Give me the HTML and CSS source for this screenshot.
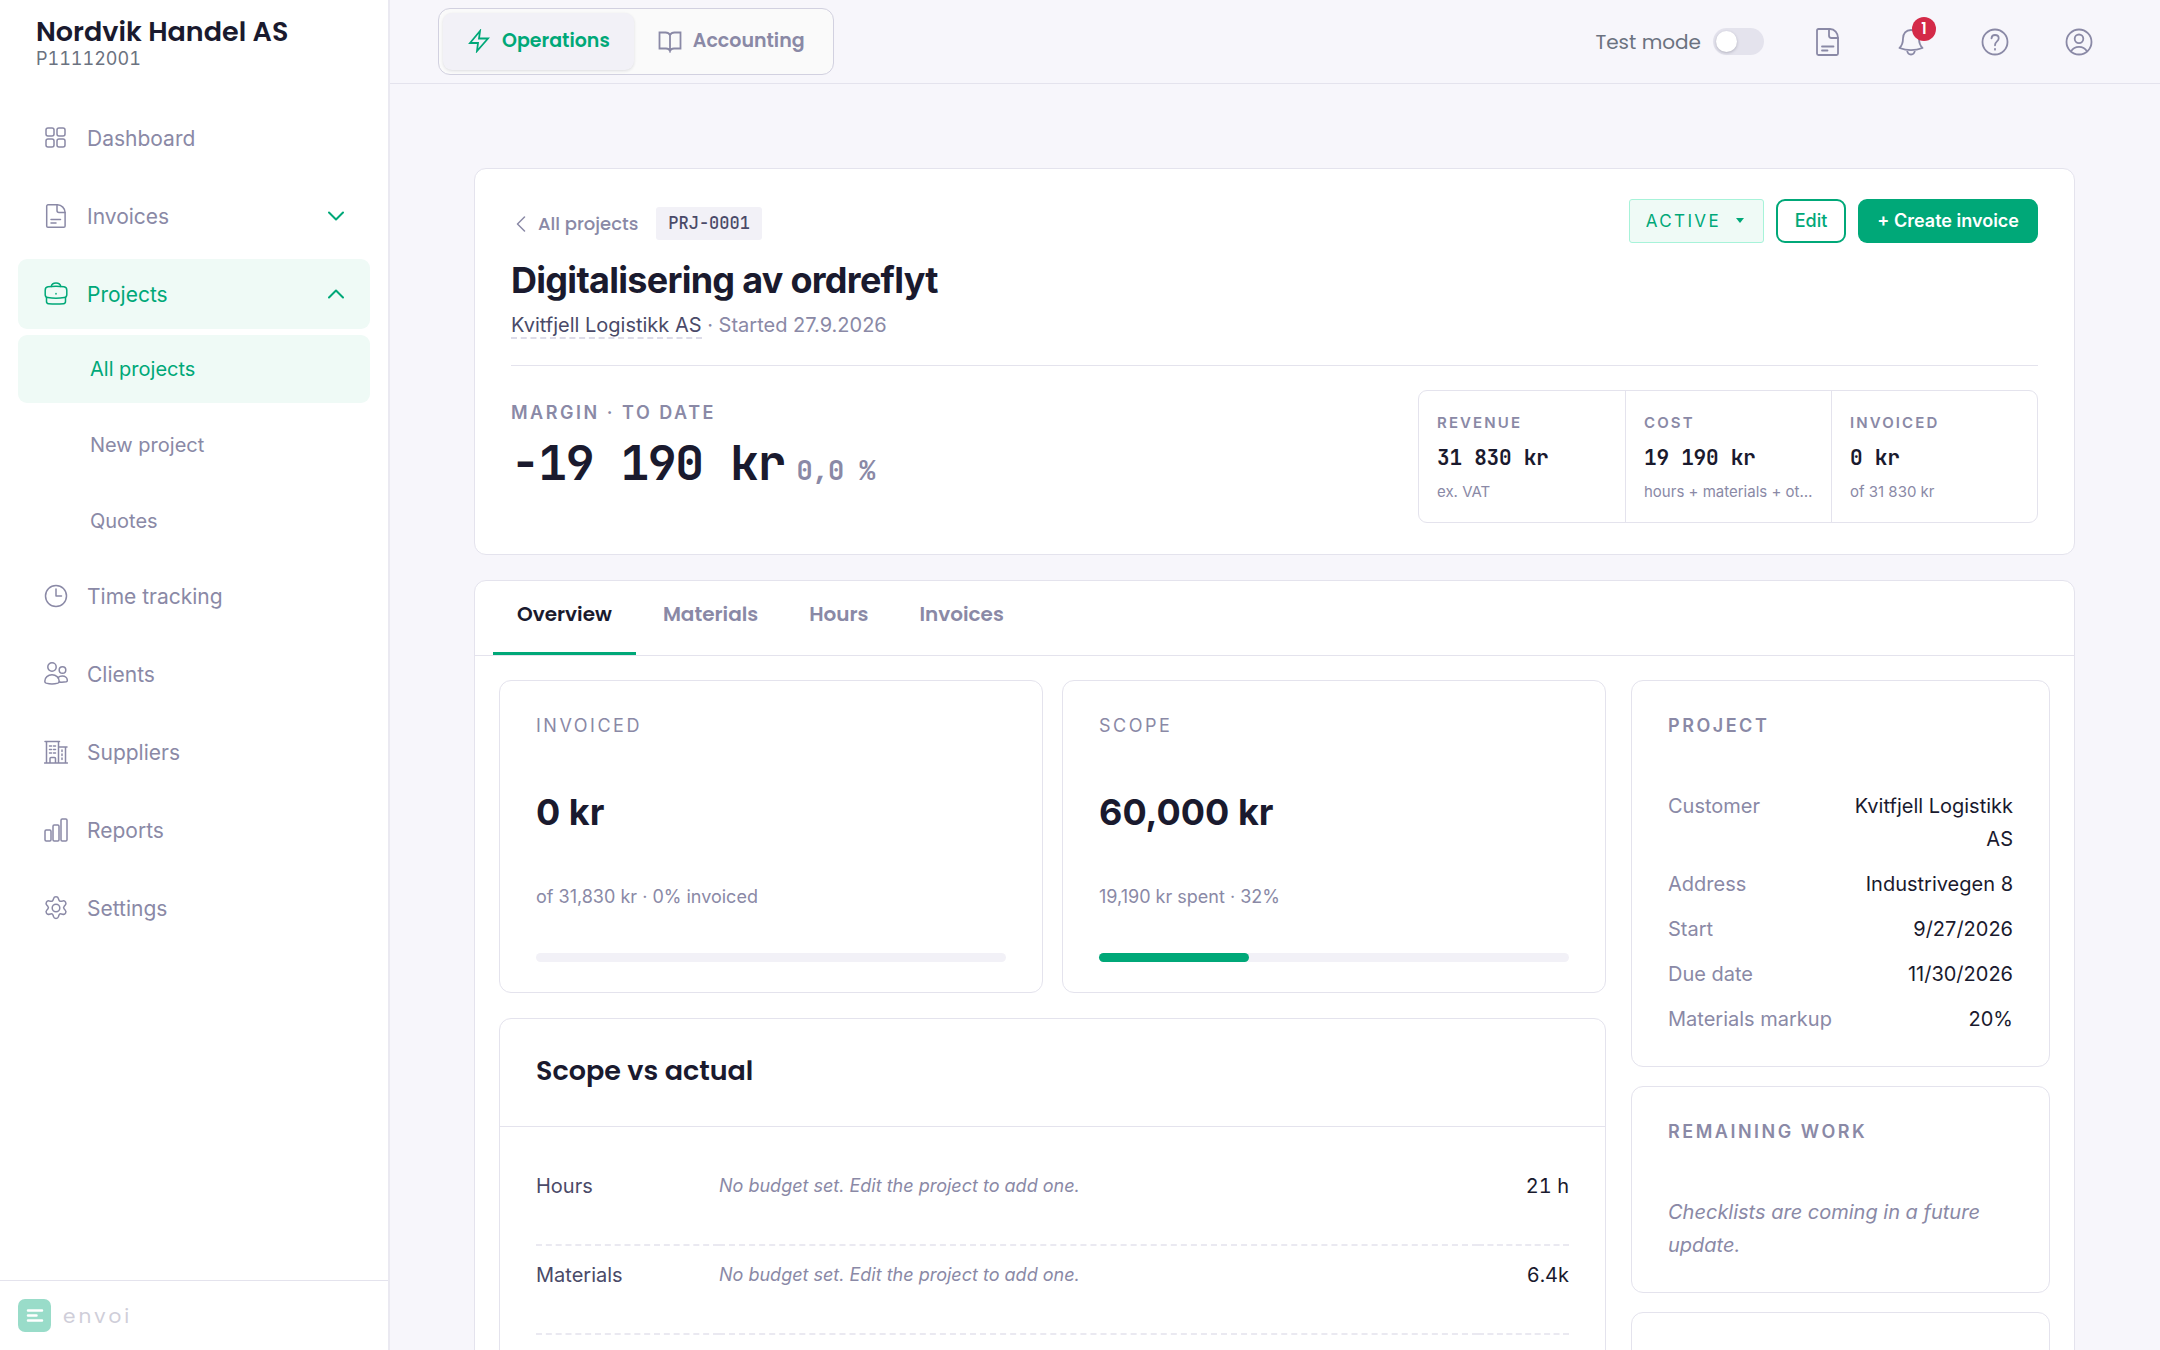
FILE: index.html
```html
<!DOCTYPE html>
<html lang="en">
<head>
<meta charset="utf-8">
<meta name="viewport" content="width=device-width, initial-scale=1">
<title>Digitalisering av ordreflyt</title>
<link rel="stylesheet" href="styles.css">
</head>
<body>
<div class="shell">
  <aside class="sidebar">
    <div class="org">
      <div class="org-name">Nordvik Handel AS</div>
      <div class="org-id">P11112001</div>
    </div>
    <nav class="nav" aria-label="Main">
      <ul class="nav-list">
        <li><a class="nav-item" href="#">
          <svg class="icon" viewBox="0 0 24 24"><rect x="2" y="2" width="8" height="8" rx="2"/><rect x="13" y="2" width="8" height="8" rx="2"/><rect x="2" y="13" width="8" height="8" rx="2"/><rect x="13" y="13" width="8" height="8" rx="2"/></svg>
          <span>Dashboard</span></a></li>
        <li><a class="nav-item" href="#">
          <svg class="icon" viewBox="0 0 24 24"><path d="M13.500 .8H4a1.300 1.300 0 0 0-1.300 1.300v19.800A1.300 1.300 0 0 0 4 23.200h15.800a1.300 1.300 0 0 0 1.300-1.300V8.500c0-4-3.600-7.700-7.600-7.700z"/><path d="M13 .8V6.500a2 2 0 0 0 2 2h6M7 15.500h9.500M7 19h5"/></svg>
          <span>Invoices</span>
          <svg class="chevron" viewBox="0 0 16 10"><path d="M1 1.500l7 7 7-7"/></svg></a></li>
        <li><a class="nav-item is-active" href="#">
          <svg class="icon" viewBox="0 0 24 24"><path d="M4 4.800c5-.7 11-.7 16 0 1.900.3 2.800 1.500 2.800 3.400v4.500c0 1.600-.9 2.600-2.500 2.900-5.400 1-11.200 1-16.600 0-1.600-.3-2.500-1.300-2.500-2.900V8.200C1.200 6.300 2.100 5.100 4 4.800z"/><path d="M2.500 15.500v4c0 1.300.8 2.100 2 2.200 5 .5 10 .5 15 0 1.200-.1 2-.9 2-2.200v-4M7.300 4.400C7.700 2 9 1 12 1s4.300 1 4.700 3.400M12 11.600v.4"/></svg>
          <span>Projects</span>
          <svg class="chevron" viewBox="0 0 16 10"><path d="M1 8.500l7-7 7 7"/></svg></a>
          <ul class="nav-sub">
            <li><a class="nav-subitem is-active" href="#">All projects</a></li>
            <li><a class="nav-subitem" href="#">New project</a></li>
            <li><a class="nav-subitem" href="#">Quotes</a></li>
          </ul></li>
        <li><a class="nav-item" href="#">
          <svg class="icon" viewBox="0 0 24 24"><circle cx="12" cy="12" r="10.500"/><path d="M12 5v7h5.500"/></svg>
          <span>Time tracking</span></a></li>
        <li><a class="nav-item" href="#">
          <svg class="icon" viewBox="0 0 24 24"><circle cx="8" cy="5" r="4.200"/><circle cx="18.500" cy="8" r="3.300"/><path d="M8 12.800c-4 0-7.200 2.700-7.200 6.400 0 1.200.5 1.600 1.400 1.900 3.800 1.100 7.800 1.100 11.600 0 .9-.3 1.400-.7 1.400-1.900 0-3.700-3.200-6.400-7.200-6.400z"/><path d="M14 15.600c1-1 2.500-1.600 4.300-1.600 3 0 5 1.900 5 4.400 0 .7-.3 1.200-1.100 1.400-2.400.5-4.700.6-7 .3"/></svg>
          <span>Clients</span></a></li>
        <li><a class="nav-item" href="#">
          <svg class="icon" viewBox="0 0 24 24"><path d="M.5 23h23M1 1.500h14.500M2.500 1.500V23M14.500 1.500V23M14.500 7H23M21.500 7v16M6 23v-4.500a1 1 0 0 1 1-1h3.500a1 1 0 0 1 1 1V23M5.500 6h2M9.500 6h2M5.500 9.500h2M9.500 9.500h2M5.500 13h2M9.500 13h2M18 10v1.500M18 14v1.500M18 18v1.500"/></svg>
          <span>Suppliers</span></a></li>
        <li><a class="nav-item" href="#">
          <svg class="icon" viewBox="0 0 24 24"><rect x="1" y="12" width="6" height="11" rx="1.200"/><rect x="9" y="7" width="6" height="16" rx="1.200"/><rect x="17" y="1" width="6" height="22" rx="1.200"/></svg>
          <span>Reports</span></a></li>
        <li><a class="nav-item" href="#">
          <svg class="icon" viewBox="0 0 24 24"><circle cx="12" cy="12" r="3.800"/><path d="M9.500 2.700a2.600 2.600 0 0 1 5 0l.4 1.200a2.100 2.100 0 0 0 2.400 1.400l1.300-.3a2.500 2.500 0 0 1 2.500 4.200l-.9 1a2.100 2.100 0 0 0 0 2.800l.9 1a2.500 2.500 0 0 1-2.500 4.200l-1.300-.3a2.100 2.100 0 0 0-2.400 1.400l-.4 1.300a2.600 2.600 0 0 1-5 0l-.4-1.300a2.100 2.100 0 0 0-2.400-1.400l-1.300.3A2.500 2.500 0 0 1 2.900 14l.9-1a2.100 2.100 0 0 0 0-2.800l-.9-1A2.500 2.500 0 0 1 5.400 5l1.300.3a2.100 2.100 0 0 0 2.400-1.400z"/></svg>
          <span>Settings</span></a></li>
      </ul>
    </nav>
    <div class="brand">
      <svg class="brand-logo" viewBox="0 0 33 33"><rect width="33" height="33" rx="7"/><path d="M10 11.500h14M10 16.500h8.500M10 21.500h14"/></svg>
      <span>envoi</span>
    </div>
  </aside>

  <div class="page">
    <header class="topbar">
      <div class="switcher">
        <button class="switch-btn is-active" type="button">
          <svg class="switch-icon" viewBox="0 0 24 24"><path d="M13 2L3 14h8l-1 8 11-12.500h-9z"/></svg>Operations</button>
        <button class="switch-btn" type="button">
          <svg class="switch-icon" viewBox="0 0 24 24"><path d="M12 6c-1-2-2.500-2.500-4.500-2.500H1.500v16H8c2 0 3.500.8 4 2.500.5-1.700 2-2.500 4-2.500h6.500v-16h-6C14.500 3.500 13 4 12 6zM12 6v16"/></svg>Accounting</button>
      </div>
      <div class="tools">
        <label class="test-mode">Test mode <input class="toggle" type="checkbox"></label>
        <button class="tool" type="button" aria-label="Documents">
          <svg class="tool-icon" viewBox="0 0 28 28"><path d="M17 1H5.500C4.500 1 4 1.600 4 2.500v23c0 .9.500 1.500 1.500 1.500h18c1 0 1.500-.6 1.500-1.500V10c0-5-3.500-9-8-9z"/><path d="M16 1v6.500c0 1.500 1 2.500 2.500 2.500H25M9 18.500h11.500M9 22.500h5.500"/></svg></button>
        <button class="tool" type="button" aria-label="Notifications">
          <svg class="tool-icon" viewBox="0 0 28 28"><path d="M14 2c-5 0-8 3.500-8 8.500 0 5-1 7-3.500 9.500 7 2.600 16 2.600 23 0C23 17.500 22 15.500 22 10.500 22 5.500 19 2 14 2zM10 22c.3 2.800 1.600 4.500 4 4.500s3.700-1.700 4-4.500"/></svg>
          <span class="badge">1</span></button>
        <button class="tool" type="button" aria-label="Help">
          <svg class="tool-icon" viewBox="0 0 28 28"><circle cx="14" cy="14" r="12.500"/><path d="M10.500 10.300C10.700 8.200 12.100 7 14 7c2.100 0 3.700 1.300 3.700 3.300 0 3.300-3.700 3-3.700 7M14 20.800v.9"/></svg></button>
        <button class="tool" type="button" aria-label="Account">
          <svg class="tool-icon" viewBox="0 0 28 28"><circle cx="14" cy="14" r="12.500"/><circle cx="14" cy="10.800" r="4.300"/><path d="M6 23.400c1.800-3 4.700-4.600 8-4.600s6.200 1.600 8 4.600"/></svg></button>
      </div>
    </header>

    <main class="content">
      <section class="card hero">
        <div class="hero-head">
          <div class="hero-title">
            <div class="crumbs">
              <a class="back" href="#"><svg class="back-icon" viewBox="0 0 10 16"><path d="M8.500 1L1.500 8l7 7"/></svg>All projects</a>
              <span class="code">PRJ-0001</span>
            </div>
            <h1>Digitalisering av ordreflyt</h1>
            <p class="hero-sub"><a class="client" href="#">Kvitfjell Logistikk AS</a> · Started 27.9.2026</p>
          </div>
          <div class="actions">
            <div class="status">
              <select class="status-select" aria-label="Status"><option>ACTIVE</option></select>
              <svg class="status-arrow" viewBox="0 0 8 5"><path d="M0 0h8L4 5z"/></svg>
            </div>
            <button class="btn btn-outline" type="button">Edit</button>
            <button class="btn btn-primary" type="button">+ Create invoice</button>
          </div>
        </div>
        <div class="hero-body">
          <div class="margin">
            <div class="label-strong">MARGIN · TO DATE</div>
            <div class="margin-value">-19 190 kr<span class="margin-pct">0,0 %</span></div>
          </div>
          <div class="figures">
            <div class="figure"><div class="figure-label">REVENUE</div><div class="figure-value">31 830 kr</div><div class="figure-note">ex. VAT</div></div>
            <div class="figure"><div class="figure-label">COST</div><div class="figure-value">19 190 kr</div><div class="figure-note">hours + materials + other</div></div>
            <div class="figure"><div class="figure-label">INVOICED</div><div class="figure-value">0 kr</div><div class="figure-note">of 31 830 kr</div></div>
          </div>
        </div>
      </section>

      <section class="card detail">
        <nav class="tabs" aria-label="Project sections">
          <a class="tab is-active" href="#">Overview</a>
          <a class="tab" href="#">Materials</a>
          <a class="tab" href="#">Hours</a>
          <a class="tab" href="#">Invoices</a>
        </nav>
        <div class="detail-grid">
          <div class="primary">
            <div class="stats">
              <div class="card stat">
                <div class="label">INVOICED</div>
                <div class="stat-value">0 kr</div>
                <div class="stat-note">of 31,830 kr · 0% invoiced</div>
                <div class="bar"><div class="bar-fill" style="width:0%"></div></div>
              </div>
              <div class="card stat">
                <div class="label">SCOPE</div>
                <div class="stat-value">60,000 kr</div>
                <div class="stat-note">19,190 kr spent · 32%</div>
                <div class="bar"><div class="bar-fill" style="width:32%"></div></div>
              </div>
            </div>
            <div class="card scope">
              <h2>Scope vs actual</h2>
              <table class="scope-table">
                <tbody>
                  <tr><th scope="row">Hours</th><td class="hint">No budget set. Edit the project to add one.</td><td class="amount">21 h</td></tr>
                  <tr><th scope="row">Materials</th><td class="hint">No budget set. Edit the project to add one.</td><td class="amount">6.4k</td></tr>
                </tbody>
              </table>
            </div>
          </div>
          <div class="secondary">
            <div class="card side-card">
              <h3 class="label-strong">PROJECT</h3>
              <dl class="facts">
                <dt>Customer</dt><dd>Kvitfjell Logistikk AS</dd>
                <dt>Address</dt><dd>Industrivegen 8</dd>
                <dt>Start</dt><dd>9/27/2026</dd>
                <dt>Due date</dt><dd>11/30/2026</dd>
                <dt>Materials markup</dt><dd>20%</dd>
              </dl>
            </div>
            <div class="card side-card">
              <h3 class="label-strong">REMAINING WORK</h3>
              <p class="coming">Checklists are coming in a future update.</p>
            </div>
            <div class="card side-card side-more"></div>
          </div>
        </div>
      </section>
    </main>
  </div>
</div>
</body>
</html>
```
FILE: styles.css
```css
:root {
  --ink: #1a1a2e;
  --mid: #4a4a68;
  --muted: #8a89a6;
  --green: #00a878;
  --tint: #effaf6;
  --line: #e4e3ed;
  --bg: #f7f6fb;
  --soft: #f2f1f7;
  --sans: Inter, "Noto Sans", sans-serif;
  --display: Poppins, Inter, sans-serif;
  --mono: "JetBrains Mono", "DejaVu Sans Mono", monospace;
}

* { box-sizing: border-box; }

body {
  margin: 0;
  background: var(--bg);
  color: var(--ink);
  font: 20px/33px var(--sans);
}

h1, h2, h3, p, ul, dl, dd { margin: 0; padding: 0; }
ul { list-style: none; }
a { color: inherit; text-decoration: none; }
button { border: 0; background: none; padding: 0; color: inherit; cursor: pointer; }
svg { display: block; flex: none; fill: none; stroke: currentColor; stroke-width: 1.5; stroke-linecap: round; stroke-linejoin: round; }

.shell { display: flex; height: 100vh; }

/* Sidebar */
.sidebar {
  display: flex;
  flex: none;
  flex-direction: column;
  width: 390px;
  background: #fff;
  border-right: 2px solid #eae9f1;
}
.org { height: 103px; padding: 16px 36px 0; }
.org-name { font: 600 27px/32px var(--display); white-space: nowrap; }
.org-id { font-size: 18px; line-height: 22px; color: #6b7280; font-variant-numeric: tabular-nums; }
.nav { flex: 1; padding: 0 18px; }
.nav-list { display: flex; flex-direction: column; gap: 8px; }
.nav-item {
  display: flex;
  align-items: center;
  gap: 19px;
  height: 70px;
  padding: 0 26px;
  border-radius: 9px;
  color: var(--muted);
  font-size: 21px;
}
.nav-item.is-active, .nav-subitem.is-active { background: var(--tint); color: var(--green); }
.icon { width: 24px; height: 24px; }
.chevron { width: 16px; height: 10px; margin-left: auto; color: var(--green); stroke-width: 2; }
.nav-sub { display: flex; flex-direction: column; gap: 8px; padding-top: 6px; margin-bottom: -2px; }
.nav-subitem {
  display: flex;
  align-items: center;
  height: 68px;
  padding-left: 72px;
  border-radius: 9px;
  color: var(--muted);
}
.brand {
  display: flex;
  align-items: center;
  gap: 12px;
  height: 70px;
  padding: 0 18px;
  border-top: 1px solid var(--line);
  color: #cfced9;
  font: 20px/30px var(--display);
  letter-spacing: 3px;
}
.brand-logo { width: 33px; height: 33px; stroke: #fff; stroke-width: 2.5; }
.brand-logo rect { fill: #99dcc9; stroke: none; }

/* Top bar */
.page { display: flex; flex: 1; flex-direction: column; min-width: 0; }
.topbar {
  display: flex;
  flex: none;
  align-items: center;
  justify-content: space-between;
  height: 84px;
  padding: 0 56px 0 48px;
  border-bottom: 1px solid var(--line);
}
.switcher {
  display: flex;
  height: 67px;
  padding: 4px;
  background: #fafafa;
  border: 1px solid #d2d1e0;
  border-radius: 12px;
}
.switch-btn {
  display: flex;
  align-items: center;
  gap: 11px;
  padding: 0 24px 2px;
  border-radius: 9px;
  color: var(--muted);
  font: 600 19px/30px var(--display);
}
.switch-btn.is-active { background: var(--soft); color: var(--green); box-shadow: 0 1px 3px rgba(26, 26, 46, .12); }
.switch-icon { width: 24px; height: 24px; stroke-width: 1.8; stroke-linejoin: miter; }
.tools { display: flex; align-items: center; gap: 34px; }
.test-mode { display: flex; align-items: center; gap: 12px; color: #6b7280; font: 20px/30px var(--display); }
.toggle {
  appearance: none;
  width: 51px;
  height: 27px;
  margin: 0;
  padding: 3px;
  background: var(--line);
  border-radius: 14px;
}
.toggle::before {
  content: "";
  display: block;
  width: 21px;
  height: 21px;
  background: #fff;
  border-radius: 50%;
  box-shadow: 0 1px 3px rgba(26, 26, 46, .25);
}
.tool {
  position: relative;
  display: grid;
  place-items: center;
  width: 50px;
  height: 50px;
  color: var(--muted);
}
.tools .tool:nth-child(2) { margin-left: 4px; }
.tool-icon { width: 28px; height: 28px; stroke-width: 1.8; }
.badge {
  position: absolute;
  top: 0;
  right: 0;
  width: 24px;
  height: 24px;
  background: #d42a48;
  border-radius: 50%;
  color: #fff;
  font: 600 15px/24px var(--display);
  text-align: center;
}

/* Content */
.content {
  flex: 1;
  min-height: 0;
  overflow-y: auto;
  scrollbar-width: none;
  padding: 84px 85px 84px 84px;
}
.card { background: #fff; border: 1px solid var(--line); border-radius: 12px; }
.label, .label-strong { color: var(--muted); font-size: 18px; line-height: 30px; letter-spacing: 0.14em; }
.label-strong { font-weight: 600; }

.hero { padding: 30px 36px 31px; margin-bottom: 25px; }
.hero-head {
  display: flex;
  justify-content: space-between;
  padding-bottom: 23px;
  border-bottom: 1px solid var(--line);
}
.hero-title { padding-top: 8px; }
.crumbs { display: flex; align-items: center; gap: 18px; }
.back {
  display: flex;
  align-items: center;
  gap: 12px;
  padding-left: 5px;
  color: var(--muted);
  font: 500 18px/33px var(--display);
}
.back-icon { width: 10px; height: 16px; }
.code {
  padding: 0 12px;
  background: var(--soft);
  border-radius: 3px;
  color: var(--mid);
  font: 500 17px/33px var(--mono);
}
h1 { margin-top: 18px; font-size: 36px; line-height: 44px; font-weight: 700; letter-spacing: -0.02em; }
.hero-sub { margin-top: 7px; color: var(--muted); }
.client { border-bottom: 2px dashed #dcdbe8; color: var(--mid); }
.actions { display: flex; align-items: flex-start; gap: 12px; }
.status { position: relative; }
.status-select {
  appearance: none;
  width: 135px;
  height: 44px;
  padding: 0 16px;
  background: var(--tint);
  border: 1px solid #a7f3d9;
  border-radius: 3px;
  color: var(--green);
  font: 400 17px/24px var(--sans);
  letter-spacing: 0.14em;
}
.status-arrow { position: absolute; top: 19px; right: 20px; width: 8px; height: 5px; color: var(--green); fill: currentColor; stroke: none; }
.btn { height: 44px; padding: 0 17px; border-radius: 9px; font: 600 18px/24px var(--sans); }
.btn-outline { border: 2px solid var(--green); background: #fff; color: var(--green); font-weight: 500; }
.btn-primary { padding: 0 19px; background: var(--green); color: #fff; }

.hero-body { display: flex; justify-content: space-between; padding-top: 24px; }
.margin { padding-top: 8px; }
.margin-value { font: 700 48px/58px var(--mono); letter-spacing: -0.03em; margin-top: 6px; white-space: nowrap; }
.margin-pct { margin-left: 12px; color: var(--muted); font-size: 27px; font-weight: 600; letter-spacing: -0.02em; }
.figures {
  display: grid;
  grid-template-columns: repeat(3, 1fr);
  width: 620px;
  border: 1px solid var(--line);
  border-radius: 9px;
}
.figure { min-width: 0; padding: 20px 18px 18px; }
.figure + .figure { border-left: 1px solid var(--line); }
.figure-label { color: var(--muted); font-size: 15px; line-height: 24px; font-weight: 600; letter-spacing: 0.14em; }
.figure-value { margin: 6px 0; font: 600 21px/33px var(--mono); letter-spacing: -0.01em; }
.figure-note { overflow: hidden; color: var(--muted); font-size: 15px; line-height: 24px; text-overflow: ellipsis; white-space: nowrap; }

.tabs { display: flex; gap: 3px; padding: 0 18px; border-bottom: 1px solid var(--line); }
.tab {
  height: 74px;
  padding: 18px 24px 0;
  border-bottom: 3px solid transparent;
  color: var(--muted);
  font: 600 20px/30px var(--display);
}
.tab.is-active { border-color: var(--green); color: var(--ink); }
.detail-grid { display: grid; grid-template-columns: minmax(0, 1fr) 419px; gap: 25px; padding: 24px; }
.primary { display: flex; flex-direction: column; gap: 25px; }
.stats { display: grid; grid-template-columns: 1fr 1fr; gap: 19px; }
.stat { padding: 30px 36px; }
.stat-value { margin: 44px 0 43px; font-size: 36px; line-height: 54px; font-weight: 700; }
.stat-note { color: var(--muted); font-size: 18px; line-height: 30px; }
.bar { height: 9px; margin-top: 41px; background: var(--soft); border-radius: 5px; }
.bar-fill { height: 100%; background: var(--green); border-radius: 5px; }

.scope { flex: 1; }
.scope h2 { padding: 31px 36px 35px; border-bottom: 1px solid var(--line); font: 600 27px/41px var(--display); }
.scope-table { width: calc(100% - 72px); margin: 30px 36px; border-collapse: collapse; }
.scope-table tr { border-bottom: 2px dashed #eae9f1; }
.scope-table th, .scope-table td {
  padding: 13px 0 41px;
  vertical-align: top;
  text-align: left;
  font-weight: 400;
}
.scope-table th { width: 183px; color: var(--mid); }
.scope-table .hint { color: var(--muted); font-size: 18px; line-height: 31px; font-style: italic; }
.scope-table .amount { text-align: right; font-variant-numeric: tabular-nums; }

.secondary { display: flex; flex-direction: column; gap: 19px; }
.side-card { padding: 30px 36px; }
.facts { display: grid; grid-template-columns: auto 1fr; gap: 12px 16px; margin-top: 49px; }
.facts dt { color: var(--muted); }
.facts dd { text-align: right; }
.coming { margin-top: 49px; color: var(--muted); font-style: italic; }
.side-more { min-height: 160px; }
```
